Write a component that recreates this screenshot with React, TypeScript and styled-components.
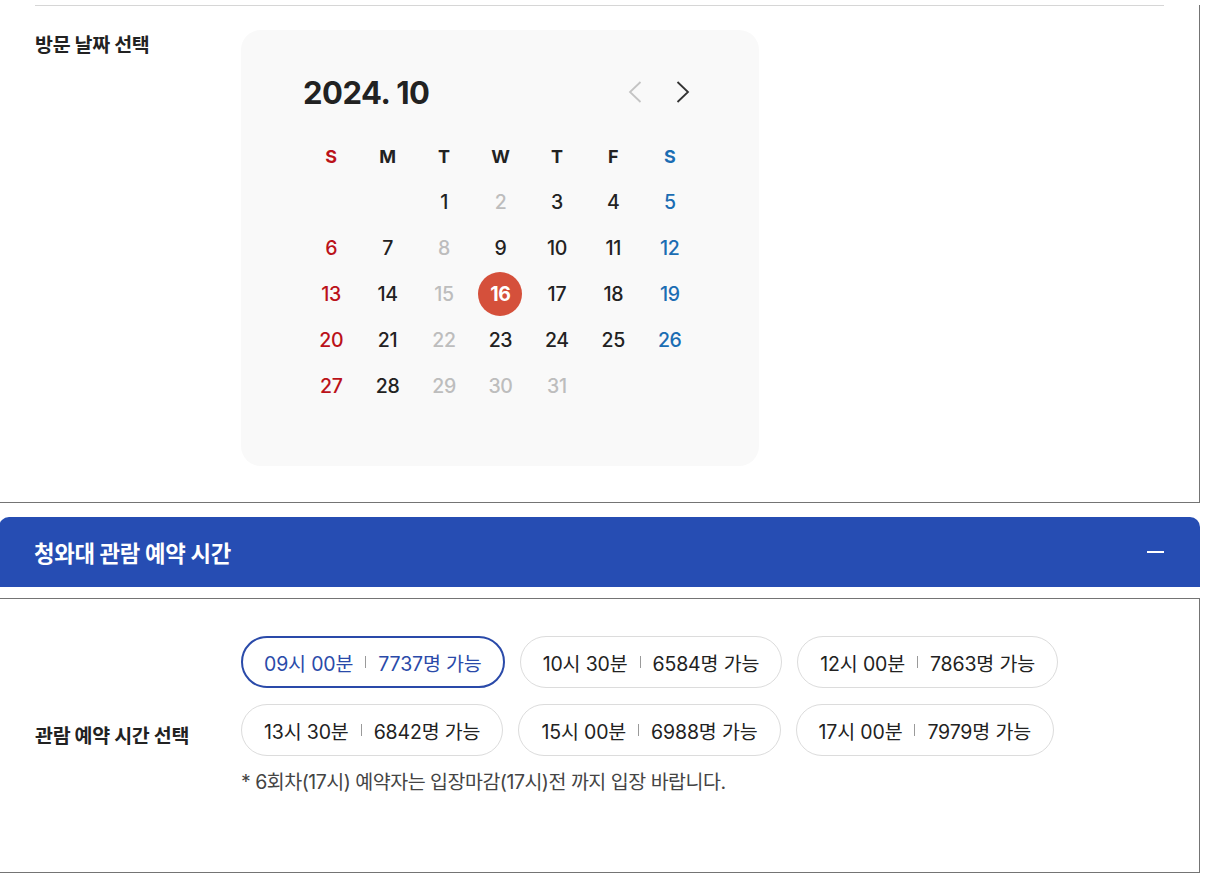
import React from "react";
import styled, { createGlobalStyle } from "styled-components";

const GlobalStyle = createGlobalStyle`
  html, body {
    margin: 0;
    padding: 0;
    background: #fff;
  }
  body {
    font-family: "Inter", "Noto Sans CJK KR", sans-serif;
    color: #222;
  }
  * {
    box-sizing: border-box;
  }
`;

const Page = styled.div`
  width: 1201px;
  margin-left: -1px;
  padding-bottom: 9px;
`;

const Panel = styled.section<{ $noTop?: boolean }>`
  border: 1px solid #747474;
  border-top: ${(p) => (p.$noTop ? "0" : "1px solid #747474")};
  padding: 0 35px;
`;

const Divider = styled.hr`
  margin: 5px 0 0;
  border: 0;
  border-top: 1px solid #d6d6d6;
`;

const Row = styled.div<{ $center?: boolean }>`
  display: flex;
  align-items: ${(p) => (p.$center ? "center" : "flex-start")};
`;

const Label = styled.div`
  width: 206px;
  flex-shrink: 0;
  font-size: 19.5px;
  font-weight: 700;
  line-height: 28px;
  color: #222;
  letter-spacing: -0.3px;
`;

const DateRow = styled(Row)`
  padding: 24px 0 36px;

  ${Label} {
    padding-top: 1px;
  }
`;

const Calendar = styled.div`
  width: 518px;
  background: #f9f9f9;
  border-radius: 20px;
  padding: 42px 61px 57px 62px;
`;

const CalHeader = styled.div`
  display: flex;
  align-items: center;
  justify-content: space-between;
  height: 40px;
  margin-bottom: 21px;
`;

const MonthTitle = styled.h2`
  margin: 0;
  font-size: 31px;
  font-weight: 700;
  letter-spacing: -0.5px;
  color: #222;
`;

const NavGroup = styled.div`
  display: flex;
  gap: 28px;
  padding-right: 5px;
`;

const NavButton = styled.button<{ $disabled?: boolean }>`
  width: 20px;
  height: 24px;
  padding: 0;
  border: 0;
  background: none;
  display: flex;
  align-items: center;
  justify-content: center;
  color: ${(p) => (p.$disabled ? "#c4c4c4" : "#333")};
  cursor: pointer;
`;

const Grid = styled.div`
  display: grid;
  grid-template-columns: repeat(7, 1fr);
  grid-auto-rows: 46px;
`;

type Tone = "sun" | "sat" | "off" | "normal";

const toneColor: Record<Tone, string> = {
  sun: "#bb1219",
  sat: "#1b6db3",
  off: "#bdbdbd",
  normal: "#222",
};

const WeekDay = styled.div<{ $tone: Tone }>`
  display: flex;
  align-items: center;
  justify-content: center;
  font-size: 18px;
  font-weight: 700;
  color: ${(p) => toneColor[p.$tone]};
`;

const Day = styled.div<{ $tone: Tone; $selected?: boolean }>`
  display: flex;
  align-items: center;
  justify-content: center;
  font-size: 19.5px;
  font-weight: 500;
  letter-spacing: -0.3px;
  color: ${(p) => (p.$selected ? "#fff" : toneColor[p.$tone])};

  span {
    width: 44px;
    height: 44px;
    border-radius: 50%;
    display: flex;
    align-items: center;
    justify-content: center;
    background: ${(p) => (p.$selected ? "#d5503b" : "transparent")};
    font-weight: ${(p) => (p.$selected ? 700 : 500)};
  }
`;

const SectionBar = styled.div`
  margin-top: 14px;
  height: 70px;
  background: #264db3;
  border-radius: 10px 10px 0 0;
  display: flex;
  align-items: center;
  justify-content: space-between;
  padding: 0 36px 0 35px;
  color: #fff;
`;

const BarTitle = styled.h3`
  margin: 0;
  font-size: 22.3px;
  font-weight: 700;
  letter-spacing: -0.3px;
`;

const Minus = styled.span`
  width: 17px;
  height: 2px;
  background: #fff;
`;

const TimePanel = styled(Panel)`
  margin-top: 11px;
  min-height: 274px;
  display: flex;
  align-items: center;
`;

const TimeContent = styled.div`
  padding: 37px 0 76px;
`;

const Slots = styled.div`
  display: flex;
  flex-wrap: wrap;
  gap: 16px 15px;
  max-width: 860px;
`;

const Slot = styled.button<{ $active?: boolean }>`
  height: 52px;
  padding: 0 ${(p) => (p.$active ? 21 : 22)}px 0 ${(p) => (p.$active ? 21 : 22)}px;
  border: ${(p) => (p.$active ? "2px solid #2a4aa9" : "1px solid #dcdcdc")};
  border-radius: 26px;
  background: #fff;
  display: flex;
  align-items: center;
  gap: 12px;
  font-family: inherit;
  font-size: 19.5px;
  font-weight: 400;
  letter-spacing: -0.15px;
  color: ${(p) => (p.$active ? "#2a4aa9" : "#222")};
  cursor: pointer;
`;

const SlotSep = styled.i`
  width: 1px;
  height: 12px;
  background: #9a9a9a;
`;

const Note = styled.p`
  margin: 12px 0 0;
  font-size: 19.5px;
  line-height: 28px;
  color: #444;
  letter-spacing: -0.5px;
`;

const Chevron = ({ dir }: { dir: "left" | "right" }) => (
  <svg width="14" height="22" viewBox="0 0 14 22" fill="none">
    <path
      d={dir === "left" ? "M12.5 1 L2 11 L12.5 21" : "M1.5 1 L12 11 L1.5 21"}
      stroke="currentColor"
      strokeWidth="1.8"
    />
  </svg>
);

const weekDays: { d: string; tone: Tone }[] = [
  { d: "S", tone: "sun" },
  { d: "M", tone: "normal" },
  { d: "T", tone: "normal" },
  { d: "W", tone: "normal" },
  { d: "T", tone: "normal" },
  { d: "F", tone: "normal" },
  { d: "S", tone: "sat" },
];

const offDays = [2, 8, 15, 22, 29, 30, 31];
const firstWeekday = 2; // 2024-10-01 is a Tuesday

const slots = [
  { time: "09시 00분", count: "7737명 가능", active: true },
  { time: "10시 30분", count: "6584명 가능" },
  { time: "12시 00분", count: "7863명 가능" },
  { time: "13시 30분", count: "6842명 가능" },
  { time: "15시 00분", count: "6988명 가능" },
  { time: "17시 00분", count: "7979명 가능" },
];

function toneFor(day: number): Tone {
  if (offDays.includes(day)) return "off";
  const wd = (firstWeekday + day - 1) % 7;
  if (wd === 0) return "sun";
  if (wd === 6) return "sat";
  return "normal";
}

export default function App() {
  const cells: (number | null)[] = [
    ...Array.from({ length: firstWeekday }, () => null),
    ...Array.from({ length: 31 }, (_, i) => i + 1),
  ];

  return (
    <Page>
      <GlobalStyle />
      <Panel $noTop>
        <Divider />
        <DateRow>
          <Label>방문 날짜 선택</Label>
          <Calendar>
            <CalHeader>
              <MonthTitle>2024. 10</MonthTitle>
              <NavGroup>
                <NavButton $disabled aria-label="이전 달">
                  <Chevron dir="left" />
                </NavButton>
                <NavButton aria-label="다음 달">
                  <Chevron dir="right" />
                </NavButton>
              </NavGroup>
            </CalHeader>
            <Grid>
              {weekDays.map((w, i) => (
                <WeekDay key={i} $tone={w.tone}>
                  {w.d}
                </WeekDay>
              ))}
              {cells.map((day, i) =>
                day === null ? (
                  <div key={i} />
                ) : (
                  <Day key={i} $tone={toneFor(day)} $selected={day === 16}>
                    <span>{day}</span>
                  </Day>
                )
              )}
            </Grid>
          </Calendar>
        </DateRow>
      </Panel>

      <SectionBar>
        <BarTitle>청와대 관람 예약 시간</BarTitle>
        <Minus />
      </SectionBar>

      <TimePanel>
        <Label>관람 예약 시간 선택</Label>
        <TimeContent>
          <Slots>
            {slots.map((s) => (
              <Slot key={s.time} $active={s.active}>
                <span>{s.time}</span>
                <SlotSep />
                <span>{s.count}</span>
              </Slot>
            ))}
          </Slots>
          <Note>* 6회차(17시) 예약자는 입장마감(17시)전 까지 입장 바랍니다.</Note>
        </TimeContent>
      </TimePanel>
    </Page>
  );
}
